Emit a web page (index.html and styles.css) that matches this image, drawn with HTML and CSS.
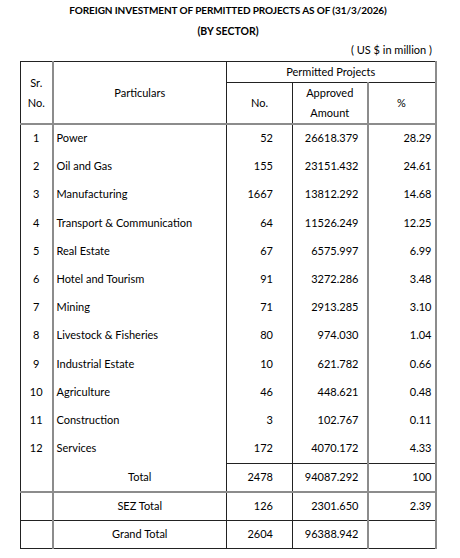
FILE: index.html
```html
<!DOCTYPE html>
<html lang="en">
<head>
  <meta charset="UTF-8">
  <meta name="viewport" content="width=device-width, initial-scale=1.0">
  <title>Foreign Investment by Sector</title>
  <link rel="stylesheet" href="styles.css">
</head>
<body>
  <div class="page">
    <h1 class="title">FOREIGN INVESTMENT OF PERMITTED PROJECTS AS OF (31/3/2026)</h1>
    <h2 class="subtitle">(BY SECTOR)</h2>
    <p class="unit">( US $ in million )</p>

    <table class="fdi">
      <colgroup>
        <col class="c-sr">
        <col class="c-name">
        <col class="c-no">
        <col class="c-amt">
        <col class="c-pct">
      </colgroup>
      <thead>
        <tr>
          <th rowspan="2" class="sr">Sr.<br>No.</th>
          <th rowspan="2" class="name-h">Particulars</th>
          <th colspan="3" class="group">Permitted Projects</th>
        </tr>
        <tr>
          <th class="no-h">No.</th>
          <th class="amt-h">Approved<br>Amount</th>
          <th class="pct-h">%</th>
        </tr>
      </thead>
      <tbody>
        <tr class="first"><td class="sr">1</td><td class="name">Power</td><td class="no">52</td><td class="amt">26618.379</td><td class="pct">28.29</td></tr>
        <tr><td class="sr">2</td><td class="name">Oil and Gas</td><td class="no">155</td><td class="amt">23151.432</td><td class="pct">24.61</td></tr>
        <tr><td class="sr">3</td><td class="name">Manufacturing</td><td class="no">1667</td><td class="amt">13812.292</td><td class="pct">14.68</td></tr>
        <tr><td class="sr">4</td><td class="name">Transport &amp; Communication</td><td class="no">64</td><td class="amt">11526.249</td><td class="pct">12.25</td></tr>
        <tr><td class="sr">5</td><td class="name">Real Estate</td><td class="no">67</td><td class="amt">6575.997</td><td class="pct">6.99</td></tr>
        <tr><td class="sr">6</td><td class="name">Hotel and Tourism</td><td class="no">91</td><td class="amt">3272.286</td><td class="pct">3.48</td></tr>
        <tr><td class="sr">7</td><td class="name">Mining</td><td class="no">71</td><td class="amt">2913.285</td><td class="pct">3.10</td></tr>
        <tr><td class="sr">8</td><td class="name">Livestock &amp; Fisheries</td><td class="no">80</td><td class="amt">974.030</td><td class="pct">1.04</td></tr>
        <tr><td class="sr">9</td><td class="name">Industrial Estate</td><td class="no">10</td><td class="amt">621.782</td><td class="pct">0.66</td></tr>
        <tr><td class="sr">10</td><td class="name">Agriculture</td><td class="no">46</td><td class="amt">448.621</td><td class="pct">0.48</td></tr>
        <tr><td class="sr">11</td><td class="name">Construction</td><td class="no">3</td><td class="amt">102.767</td><td class="pct">0.11</td></tr>
        <tr><td class="sr">12</td><td class="name">Services</td><td class="no">172</td><td class="amt">4070.172</td><td class="pct">4.33</td></tr>
        <tr class="total">
          <td class="sr"></td><td class="label">Total</td><td class="no">2478</td><td class="amt">94087.292</td><td class="pct">100</td>
        </tr>
        <tr class="sez">
          <td class="sr"></td><td class="label">SEZ Total</td><td class="no">126</td><td class="amt">2301.650</td><td class="pct">2.39</td>
        </tr>
        <tr class="grand">
          <td class="sr"></td><td class="label">Grand Total</td><td class="no">2604</td><td class="amt">96388.942</td><td class="pct"></td>
        </tr>
      </tbody>
    </table>
  </div>
</body>
</html>
```

FILE: styles.css
```css
body {
  margin: 0;
  background: #fff;
  color: #000;
  font-family: Lato, "Open Sans", sans-serif;
  font-size: 11px;
}
.page {
  width: 416px;
  margin-left: 20px;
}
.title, .subtitle {
  margin: 0;
  text-align: center;
  font-weight: bold;
  line-height: 20px;
  color: #000;
}
.title {
  font-size: 10px;
  letter-spacing: -0.1px;
}
.subtitle {
  font-size: 10.5px;
  padding-top: 1px;
}
.unit {
  margin: 0;
  text-align: right;
  padding-right: 4px;
  line-height: 18px;
}
.fdi {
  margin-top: 2px;
  border-collapse: collapse;
  table-layout: fixed;
  width: 416px;
  border-top: 1px solid #222;
  border-left: 1px solid #222;
  border-right: 2px solid #8c8c8c;
  border-bottom: 1px solid #222;
}
.c-sr { width: 32px; }
.c-name { width: 174px; }
.c-no { width: 66px; }
.c-amt { width: 75px; }
.c-pct { width: 68px; }

.fdi th {
  font-weight: normal;
  padding: 0;
  line-height: 20px;
}
.fdi th.group {
  height: 19px;
  border-bottom: 1px solid #222;
}
.fdi thead tr:last-child th {
  height: 40px;
  border-bottom: 2px solid #8c8c8c;
}
.fdi thead th.sr, .fdi thead th.name-h {
  border-bottom: 2px solid #8c8c8c;
}

.fdi td {
  padding: 0 0 3px;
  height: 25.2px;
  vertical-align: middle;
}
.fdi .sr {
  text-align: center;
  border-right: 2px solid #8c8c8c;
}
.fdi .name, .fdi .name-h, .fdi .label {
  border-right: 1px solid #222;
}
.fdi .name {
  padding-left: 3px;
}
.fdi .label {
  text-align: center;
}
.fdi .no, .fdi .no-h {
  border-right: 1px solid #222;
}
.fdi .no {
  text-align: right;
  padding-right: 19px;
}
.fdi .amt, .fdi .amt-h {
  border-right: 2px solid #8c8c8c;
}
.fdi .amt {
  text-align: right;
  padding-right: 8px;
}
.fdi .pct {
  text-align: right;
  padding-right: 3px;
}
.fdi tr.total td, .fdi tr.grand td {
  height: 24px;
}
.fdi tr.sez td {
  height: 24px;
}
.fdi tr.total .no, .fdi tr.total .amt, .fdi tr.total .pct {
  border-top: 1px solid #222;
}
.fdi tr.sez td {
  border-top: 2px solid #8c8c8c;
}
.fdi tr.grand td {
  border-top: 1px solid #222;
}
```
